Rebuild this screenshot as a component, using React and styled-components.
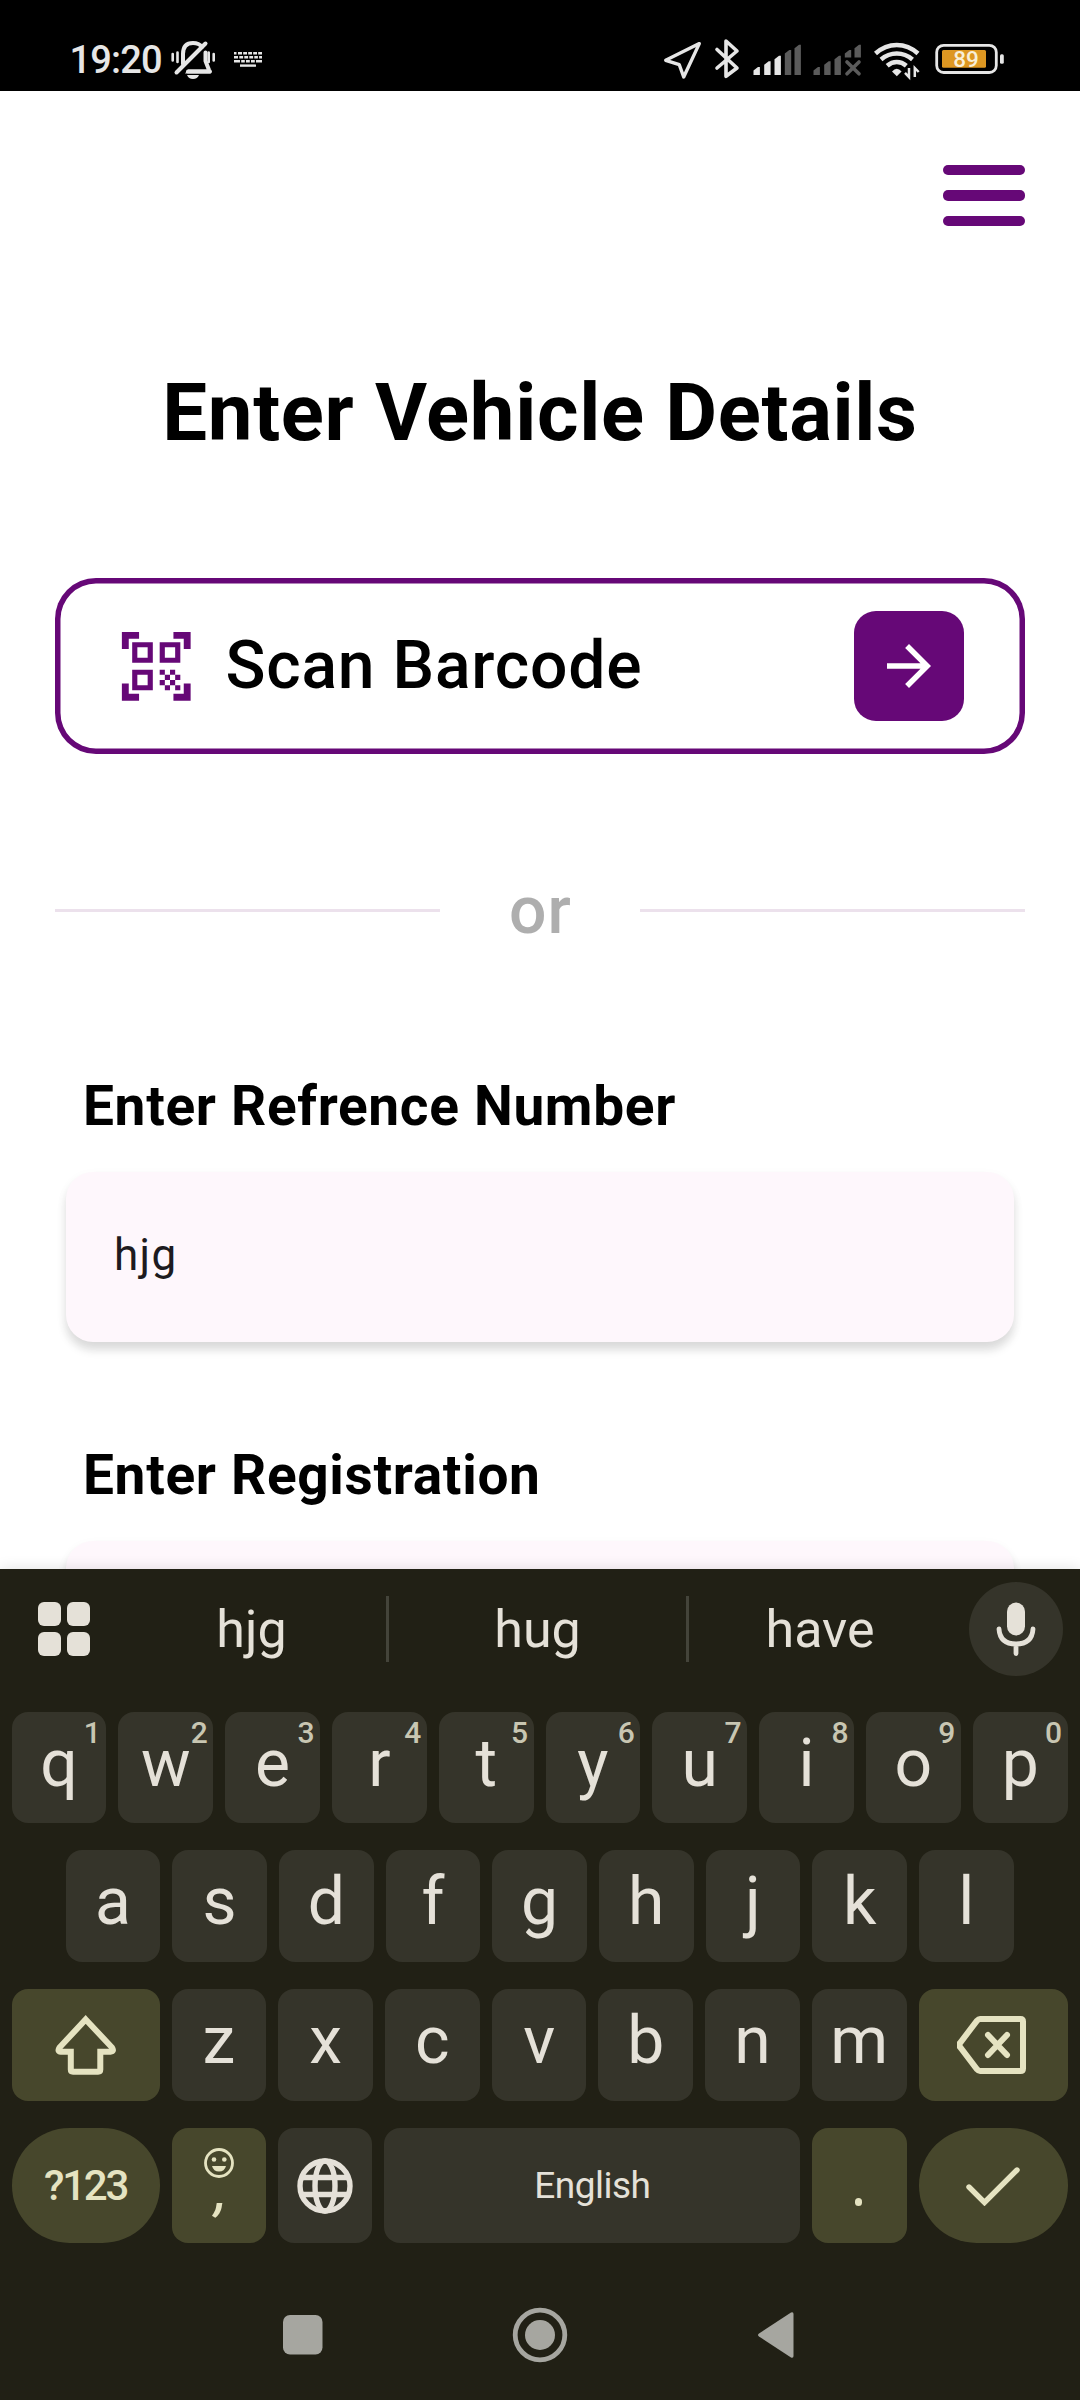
import React from "react";
import styled, { createGlobalStyle, css } from "styled-components";

const purple = "#660877";
const cream = "#e5e1d8";
const lime = "#e5e3c1";
const light = "#e6e6e6";
const dim = "#5b5b5b";

const GlobalStyle = createGlobalStyle`
  * { box-sizing: border-box; }
  body { margin: 0; background: #fff; font-family: Roboto, "Liberation Sans", sans-serif; }
`;

const Screen = styled.div`
  width: 1080px;
  height: 2400px;
  display: flex;
  flex-direction: column;
  overflow: hidden;
  background: #fff;
`;

const Icon = styled.svg`
  display: block;
  flex: none;
`;

/* Status bar */
const StatusBar = styled.header`
  height: 91px;
  flex: none;
  display: flex;
  background: #000;
  color: ${light};
`;

const Clock = styled.div`
  width: 171px;
  padding: 38px 0 0 69.5px;
  font-size: 38px;
  line-height: 45px;
  font-weight: 500;
  letter-spacing: -0.8px;
`;

const StatusRight = styled.div`
  margin-left: auto;
  display: flex;
`;

/* Page */
const Page = styled.main`
  flex: 1;
  min-height: 0;
  overflow: hidden;
  display: flex;
  flex-direction: column;
  padding: 73.5px 55px 0;

  > * { flex-shrink: 0; }
`;

const MenuButton = styled.div`
  align-self: flex-end;
  width: 82px;
  height: 62px;
  display: flex;
  flex-direction: column;
  justify-content: space-between;
`;

const MenuBar = styled.span`
  height: 10.4px;
  border-radius: 5px;
  background: ${purple};
`;

const Title = styled.h1`
  margin: 139px 0 0;
  height: 94px;
  line-height: 94px;
  text-align: center;
  font-size: 79.75px;
  font-weight: 700;
  color: #000;
  white-space: nowrap;
  letter-spacing: 0.68px;
`;

const ScanCard = styled.div`
  margin-top: 118px;
  height: 176.5px;
  border-radius: 41px;
  box-shadow: inset 0 0 0 5.5px ${purple};
  display: flex;
  align-items: center;
  padding: 0 61px 0 60px;
`;

const ScanText = styled.span`
  margin-left: 28px;
  font-size: 66px;
  line-height: 78px;
  font-weight: 500;
  letter-spacing: 0.78px;
  color: #000;
`;

const ArrowButton = styled.div`
  margin-left: auto;
  width: 110px;
  height: 110px;
  border-radius: 22px;
  background: ${purple};
  display: flex;
  align-items: center;
  justify-content: center;
`;

const Divider = styled.div`
  margin-top: 117px;
  height: 78px;
  display: flex;
  align-items: center;
  justify-content: space-between;
`;

const Rule = styled.span`
  width: 385px;
  height: 3px;
  background: #ece1ec;
`;

const OrText = styled.span`
  padding: 1px 0 0 1px;
  font-size: 66px;
  line-height: 78px;
  font-weight: 500;
  color: #aeaeae;
  letter-spacing: 1px;
`;

const Field = styled.section`
  margin-top: ${(p) => p.$gap}px;
  padding: 0 11px;
`;

const Label = styled.label`
  display: block;
  padding-left: 17px;
  font-size: 55px;
  line-height: 64px;
  font-weight: 700;
  color: #000;
  letter-spacing: 0.68px;
`;

const Input = styled.div`
  margin-top: 33.5px;
  height: 170.5px;
  border-radius: 27px;
  background: #fef7fc;
  box-shadow: 0 8px 10px rgba(0, 0, 0, 0.13), 0 4px 14px rgba(0, 0, 0, 0.03);
  display: flex;
  align-items: center;
  padding: 0 47px 3px 48px;
  font-size: 44px;
  letter-spacing: 1.375px;
  color: #1d1b20;
`;

/* Keyboard */
const Keyboard = styled.section`
  height: 831px;
  flex: none;
  background: #212015;
  display: flex;
  flex-direction: column;
  color: ${cream};
  box-shadow: 0 0 14px rgba(0, 0, 0, 0.12);
  z-index: 1;
`;

const Suggestions = styled.div`
  height: 143px;
  flex: none;
  display: flex;
  align-items: flex-start;
`;

const GridButton = styled.div`
  width: 117px;
  height: 120px;
  display: flex;
  align-items: center;
  padding-left: 37.5px;
`;

const Suggestion = styled.div`
  width: ${(p) => p.$width}px;
  height: 120px;
  line-height: 122px;
  text-align: center;
  font-size: 52px;
`;

const Separator = styled.span`
  width: 3px;
  height: 66px;
  margin-top: 27px;
  background: #44443a;
`;

const MicButton = styled.div`
  width: 94px;
  height: 94px;
  margin: 13px 17px 0 auto;
  border-radius: 50%;
  background: #35342a;
  display: flex;
  align-items: center;
  justify-content: center;
`;

const KeyRow = styled.div`
  display: flex;
  gap: 12px;
  height: ${(p) => p.$height || 112}px;
  margin-bottom: ${(p) => p.$after ?? 27}px;
  padding: 0 ${(p) => (p.$inset || 12) + 0.4}px 0 ${(p) => (p.$inset || 12) - 0.4}px;
  flex: none;
`;

const Key = styled.div`
  position: relative;
  ${(p) => (p.$width ? css`flex: none; width: ${p.$width}px;` : css`flex: 1 1 0; min-width: 0;`)}
  border-radius: ${(p) => (p.$pill ? 58 : 16)}px;
  background: ${(p) => (p.$accent ? "#47472c" : "#35342a")};
  color: ${(p) => (p.$accent ? lime : cream)};
  display: flex;
  flex-direction: column;
  align-items: center;
  justify-content: center;
`;

const Letter = styled.span`
  font-size: 66px;
  line-height: 78px;
  padding-bottom: 8px;
`;

const Hint = styled.sup`
  position: absolute;
  top: 4px;
  right: 5.5px;
  font-size: 30px;
  line-height: 34px;
  font-weight: 500;
  color: #c8c6b2;
`;

const KeyText = styled.span`
  font-size: ${(p) => p.$size}px;
  line-height: 50px;
  font-weight: ${(p) => p.$weight || 400};
  letter-spacing: ${(p) => p.$spacing || 0}px;
`;

const EmojiKeyContent = styled.div`
  display: flex;
  flex-direction: column;
  align-items: center;
  height: 75px;
`;

const Comma = styled.span`
  margin: 3px 0 0 4px;
  height: 30px;
  font-size: 54px;
  line-height: 20px;
  font-style: italic;
  font-weight: 500;
`;

const Dot = styled.span`
  width: 7.5px;
  height: 7.5px;
  margin: 33px 2px 0 0;
  border-radius: 50%;
  background: ${lime};
`;

const NavBar = styled.nav`
  flex: 1;
  display: flex;
  justify-content: center;
  align-items: flex-start;
  padding-top: 62px;
  gap: 178px;
`;

const Strip = ({ x, w, children }) => (
  <Icon width={w} height="91" viewBox={`${x} 0 ${w} 91`} fill={light}>{children}</Icon>
);

const topRow = [["q", 1], ["w", 2], ["e", 3], ["r", 4], ["t", 5], ["y", 6], ["u", 7], ["i", 8], ["o", 9], ["p", 0]];

const bars = [
  [0, 67], [10.7, 61.3], [21, 55.7], [31.3, 50], [41, 44.7],
];
const Bar = ({ x, y, bottom = 75, fill }) => (
  <path d={`M${x} ${bottom}V${y + 3.5}L${x + 4.5} ${y}H${x + 6.4}V${bottom}Z`} fill={fill} />
);

export default function App() {
  return (
    <>
      <GlobalStyle />
      <Screen>
        <StatusBar>
          <Clock>19:20</Clock>
          <Strip x={171} w={101}>
            <g fill="none" stroke={light} strokeWidth="4" strokeLinecap="round" strokeLinejoin="round">
              <path d="M183 64V54Q183 43 193 43Q199 43 202 47M205.500 52.500V61L209 70L210 71.500H188" />
              <path d="M176.500 72.500L205.500 43.500" />
            </g>
            <path d="M185 73.500L188 69.500H209.500L210.500 73.500Z" />
            <path d="M187 75H199Q197.500 79 193 79Q188.500 79 187 75Z" />
            <g stroke={light} strokeWidth="2.600" strokeLinecap="round">
              <path d="M172.700 54V60.500M177.500 52.500V62M208.700 52.500V62M213.700 54V60.500" />
            </g>
            <g stroke={light} strokeWidth="2.400" fill="none">
              <path d="M234 53.200H262" strokeDasharray="2.500 1.500 4 1.200 3.800 1.200 3.800 1.200 3.800 1.200 4" />
              <path d="M234 57.200H262" strokeDasharray="4 1.300 3.800 1.200 3.800 1.200 3.800 1.200 3.600 1.200 3" />
              <path d="M234 61.200H262" strokeDasharray="6 1.200 3.600 1.200 3.800 1.200 3.800 1.200 6" />
              <path d="M240 65.600H256" />
            </g>
          </Strip>
          <StatusRight>
            <Strip x={660} w={90}>
              <path d="M699.300 43.600L665.700 60.300L679.300 64.700L683.700 77Z" fill="none" stroke={light} strokeWidth="3.400" strokeLinejoin="round" />
              <path d="M717 49.500L737 68L726 76.300V41L737 51L717 68" fill="none" stroke={light} strokeWidth="3.600" strokeLinejoin="round" strokeLinecap="round" />
            </Strip>
            <Strip x={750} w={120}>
              {bars.map(([x, y], i) => <Bar key={i} x={753.5 + x} y={y} fill={i < 3 ? light : dim} />)}
              {bars.slice(0, 3).map(([x, y], i) => <Bar key={i} x={813.5 + x} y={y} fill={dim} />)}
              <Bar x={844.8} y={50} bottom={57.5} fill={dim} />
              <Bar x={854.5} y={44.7} bottom={57.5} fill={dim} />
              <path d="M847 62L859 73.800M859 62L847 73.800" stroke={dim} strokeWidth="3.600" strokeLinecap="round" />
            </Strip>
            <Strip x={870} w={60}>
              <g fill="none" stroke={light} strokeWidth="4.500">
                <path d="M875.500 53.500Q885 45 896.800 45Q908.500 45 918 53.500" />
                <path d="M881 59.500Q888 53.500 896.800 53.500Q905.500 53.500 912.500 59.500" />
                <path d="M887.200 65.800Q891.500 62 896.800 62Q902 62 906.300 65.800" />
              </g>
              <path d="M892 71.500Q896.800 66 901.600 71.500L896.800 76.300Z" />
              <path d="M909 68V77L905 72.800M914.800 77V68L918.700 72" fill="none" stroke={light} strokeWidth="2.500" />
            </Strip>
            <Strip x={930} w={150}>
              <rect x="936.700" y="45.300" width="59.600" height="27.200" rx="7" fill="none" stroke={light} strokeWidth="2.800" />
              <rect x="942" y="50" width="44" height="17.800" rx="1.500" fill="#dd9722" />
              <rect x="1000" y="54.300" width="3.800" height="9.500" rx="1.500" />
              <text x="966" y="67.300" textAnchor="middle" fontSize="22.500" fontWeight="500" fontFamily="Roboto, sans-serif" fill="#f8efd8">89</text>
            </Strip>
          </StatusRight>
        </StatusBar>

        <Page>
          <MenuButton><MenuBar /><MenuBar /><MenuBar /></MenuButton>
          <Title>Enter Vehicle Details</Title>
          <ScanCard>
            <Icon width="82.5" height="82.5" viewBox="0 0 24 24" fill={purple}>
              <path d="M9.500 6.500v3h-3v-3h3M11 5H5v6h6V5zm-1.500 9.500v3h-3v-3h3M11 13H5v6h6v-6zm6.500-6.500v3h-3v-3h3M19 5h-6v6h6V5zm-6 8h1.500v1.500H13V13zm1.500 1.500H16V16h-1.500v-1.500zM16 13h1.500v1.500H16V13zm-3 3h1.500v1.500H13V16zm1.500 1.500H16V19h-1.500v-1.500zM16 16h1.500v1.500H16V16zm1.500-1.500H19V16h-1.500v-1.500zm0 3H19V19h-1.500v-1.500zM22 7h-2V4h-3V2h5v5zm0 15v-5h-2v3h-3v2h5zM2 22h5v-2H4v-3H2v5zM2 2v5h2V4h3V2H2z" />
            </Icon>
            <ScanText>Scan Barcode</ScanText>
            <ArrowButton>
              <Icon width="66" height="66" viewBox="0 0 24 24" fill="#fff">
                <path d="M12 4l-1.410 1.410L16.170 11H4v2h12.170l-5.580 5.590L12 20l8-8z" />
              </Icon>
            </ArrowButton>
          </ScanCard>
          <Divider><Rule /><OrText>or</OrText><Rule /></Divider>
          <Field $gap={125}>
            <Label>Enter Refrence Number</Label>
            <Input>hjg</Input>
          </Field>
          <Field $gap={101}>
            <Label>Enter Registration</Label>
            <Input />
          </Field>
        </Page>

        <Keyboard>
          <Suggestions>
            <GridButton>
              <Icon width="52" height="54" viewBox="0 0 52 54" fill={cream}>
                <rect width="23" height="24" rx="6" />
                <rect x="29" width="23" height="24" rx="6" />
                <rect y="30" width="23" height="24" rx="6" />
                <rect x="29" y="30" width="23" height="24" rx="6" />
              </Icon>
            </GridButton>
            <Suggestion $width={269}>hjg</Suggestion>
            <Separator />
            <Suggestion $width={297}>hug</Suggestion>
            <Separator />
            <Suggestion $width={262}>have</Suggestion>
            <MicButton>
              <Icon width="40" height="54" viewBox="0 0 40 54">
                <rect x="11" y="0.5" width="18" height="33" rx="9" fill={cream} />
                <path d="M3 27Q4 42 20 42Q36 42 37 27M20 42V51.500" fill="none" stroke={cream} strokeWidth="4.800" strokeLinecap="round" />
              </Icon>
            </MicButton>
          </Suggestions>

          <KeyRow $height={111}>
            {topRow.map(([letter, hint]) => (
              <Key key={letter}><Letter>{letter}</Letter><Hint>{hint}</Hint></Key>
            ))}
          </KeyRow>
          <KeyRow $inset={66}>
            {[..."asdfghjkl"].map((l) => <Key key={l}><Letter>{l}</Letter></Key>)}
          </KeyRow>
          <KeyRow>
            <Key $width={148} $accent>
              <Icon width="62" height="60" viewBox="0 0 62 60">
                <path d="M30.700 4.500L57 32.500Q59.500 36.500 55.500 36.700H45.300V54.500Q45.300 56.700 43.100 56.700H18Q15.800 56.700 15.800 54.500V36.700H5.800Q2 36.500 4.500 32.500Z" fill="none" stroke={lime} strokeWidth="6" />
              </Icon>
            </Key>
            {[..."zxcvbnm"].map((l) => <Key key={l}><Letter>{l}</Letter></Key>)}
            <Key $width={149} $accent>
              <Icon width="72" height="60" viewBox="2 0 72 60">
                <path d="M25 4H65.500Q68 4 68 6.500V53.500Q68 56 65.500 56H25Q23.500 56 22 54.300L5 32Q3.300 30 5 28L22 5.700Q23.500 4 25 4Z" fill="none" stroke={lime} strokeWidth="6" />
                <path d="M33 20L52 40M52 20L33 40" stroke={lime} strokeWidth="6" strokeLinecap="round" />
              </Icon>
            </Key>
          </KeyRow>
          <KeyRow $height={115} $after={0}>
            <Key $width={148} $accent $pill><KeyText $size={42} $weight={500} $spacing={-2.2}>?123</KeyText></Key>
            <Key $accent>
              <EmojiKeyContent>
                <Icon width="30" height="30" viewBox="0 0 30 30" fill={lime}>
                  <circle cx="15" cy="15" r="13.500" fill="none" stroke={lime} strokeWidth="2.800" />
                  <circle cx="10" cy="11.500" r="2.300" />
                  <circle cx="20.300" cy="11.500" r="2.300" />
                  <path d="M8 18H22Q20.500 23.500 15 23.500Q9.500 23.500 8 18Z" />
                </Icon>
                <Comma>,</Comma>
              </EmojiKeyContent>
            </Key>
            <Key>
              <Icon width="56" height="56" viewBox="0 0 56 56" fill="none" stroke={cream} strokeWidth="5.400">
                <circle cx="28" cy="28" r="25" />
                <ellipse cx="28" cy="28" rx="10" ry="25" />
                <path d="M4 19.500H52M4 36.500H52" />
              </Icon>
            </Key>
            <Key $width={416}><KeyText $size={37} $spacing={-0.5}>English</KeyText></Key>
            <Key $accent><Dot /></Key>
            <Key $width={149} $accent $pill>
              <Icon width="54" height="40" viewBox="0 0 54 40">
                <path d="M3 21L18.500 36.500L51 4" fill="none" stroke={lime} strokeWidth="5.400" strokeLinecap="round" strokeLinejoin="miter" />
              </Icon>
            </Key>
          </KeyRow>

          <NavBar>
            <Icon width="60" height="60" viewBox="0 0 60 60" fill="#a6a6a0">
              <rect x="11" y="10" width="39.500" height="39.500" rx="7" />
            </Icon>
            <Icon width="60" height="60" viewBox="0 0 60 60" fill="#a6a6a0">
              <circle cx="30" cy="30" r="24.800" fill="none" stroke="#a6a6a0" strokeWidth="4.800" />
              <circle cx="30" cy="30" r="15" />
            </Icon>
            <Icon width="60" height="60" viewBox="1 0 60 60" fill="#a6a6a0">
              <path d="M12 28.500Q10 30 12 31.500L44 52.500Q46.500 53.500 46.500 51V9Q46.500 6.500 44 7.500Z" />
            </Icon>
          </NavBar>
        </Keyboard>
      </Screen>
    </>
  );
}
